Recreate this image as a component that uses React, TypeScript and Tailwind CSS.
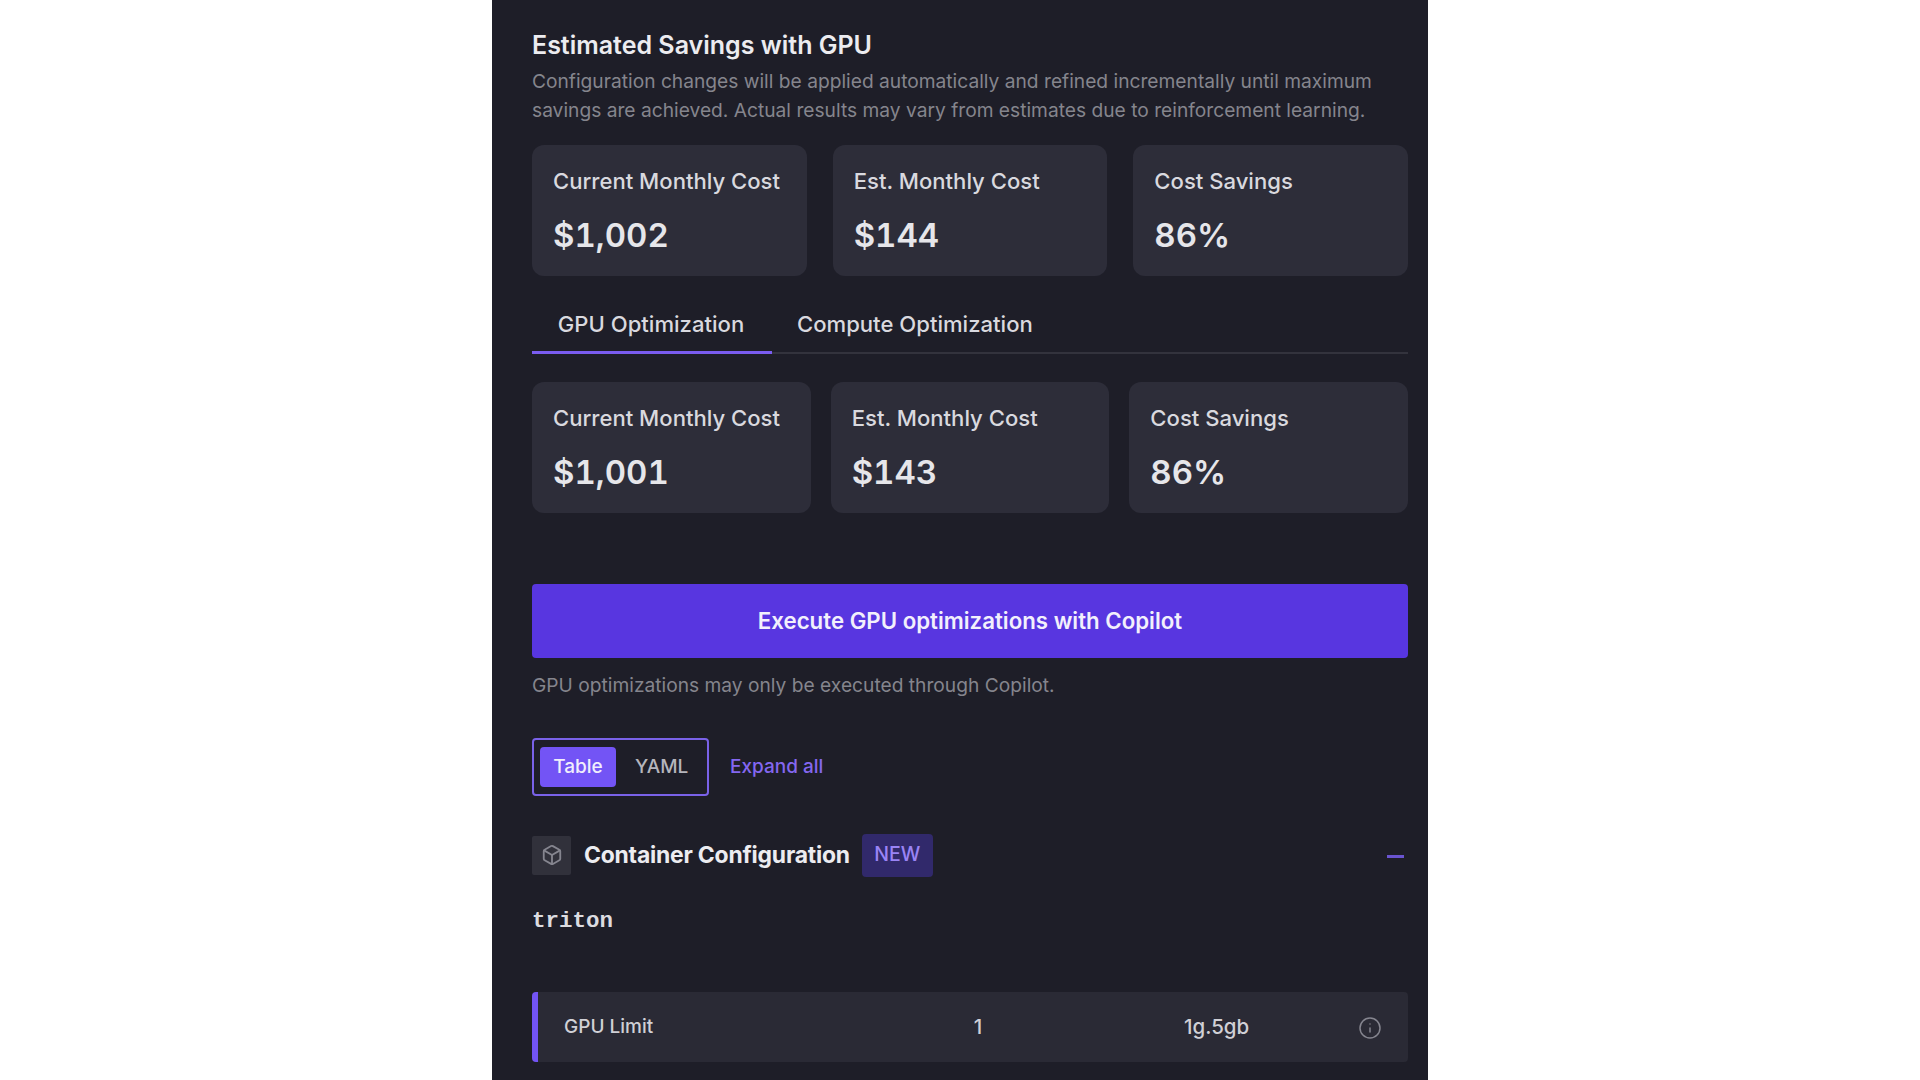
import React from "react";

function Card({ label, value }: { label: string; value: string }) {
  return (
    <div className="h-[131px] rounded-xl bg-[#2d2d39] pl-[21px] pt-[22px]">
      <div className="text-[22.1px] leading-[28px] font-medium text-[#d9d9df]">{label}</div>
      <div className="mt-[20px] text-[33px] leading-[40px] font-semibold tabular-nums text-[#e6e6ea]">{value}</div>
    </div>
  );
}

export default function App() {
  return (
    <div className="h-screen overflow-hidden bg-white flex justify-center font-['Inter',sans-serif]">
      <div className="w-[936px] h-[1080px] overflow-hidden bg-[#1e1e28] pl-[40px] pr-[20px] pt-[29px]">
        <h1 className="text-[25px] leading-[32px] font-semibold text-[#ececf0]">Estimated Savings with GPU</h1>
        <p className="mt-[6px] text-[19.2px] leading-[28.5px] text-[#85858d]">
          Configuration changes will be applied automatically and refined incrementally until maximum savings are achieved. Actual results may vary from estimates due to reinforcement learning.
        </p>
        <div className="mt-[21px] grid grid-cols-3 gap-[26px]">
          <Card label="Current Monthly Cost" value="$1,002" />
          <Card label="Est. Monthly Cost" value="$144" />
          <Card label="Cost Savings" value="86%" />
        </div>
        <div className="mt-[20px] flex h-[58px] border-b-2 border-[#33333d]">
          <div className="w-[240px] h-[58px] border-b-[3px] border-[#7a5cf0] flex items-center justify-center pt-[2px] pr-[2px] text-[22.1px] font-medium text-[#d9d9df]">GPU Optimization</div>
          <div className="ml-[25px] h-[56px] flex items-center pt-[1px] text-[22.1px] font-medium text-[#d9d9df]">Compute Optimization</div>
        </div>
        <div className="mt-[28px] grid grid-cols-3 gap-[20px]">
          <Card label="Current Monthly Cost" value="$1,001" />
          <Card label="Est. Monthly Cost" value="$143" />
          <Card label="Cost Savings" value="86%" />
        </div>
        <button className="mt-[71px] block w-full h-[74px] rounded-[4px] bg-[#5836e0] text-[22.25px] font-semibold text-[#f2f0fc]">Execute GPU optimizations with Copilot</button>
        <p className="mt-[14px] text-[19.2px] leading-[26px] text-[#85858d]">GPU optimizations may only be executed through Copilot.</p>
        <div className="mt-[40px] flex items-center">
          <div className="flex h-[58px] w-[177px] items-center rounded-[4px] border-2 border-[#7a62e8] pl-[6px]">
            <div className="flex h-[40px] w-[76px] items-center justify-center rounded-[4px] bg-[#7354f5] text-[19px] font-medium text-[#f0eefc]">Table</div>
            <div className="ml-[19px] text-[19px] font-medium text-[#b5b5bc]">YAML</div>
          </div>
          <div className="ml-[21px] text-[19px] font-medium text-[#8467f0]">Expand all</div>
        </div>
        <div className="mt-[37px] flex h-[44px] items-center">
          <div className="flex h-[39px] w-[39px] items-center justify-center rounded-[2px] bg-[#31313b]">
            <svg width="22" height="22" viewBox="0 0 24 24" fill="none" stroke="#85858f" strokeWidth="2" strokeLinecap="round" strokeLinejoin="round">
              <path d="M21 8a2 2 0 0 0-1-1.73l-7-4a2 2 0 0 0-2 0l-7 4A2 2 0 0 0 3 8v8a2 2 0 0 0 1 1.73l7 4a2 2 0 0 0 2 0l7-4A2 2 0 0 0 21 16Z" />
              <path d="m3.3 7 8.7 5 8.7-5" />
              <path d="M12 22V12" />
            </svg>
          </div>
          <div className="ml-[13px] text-[22.9px] font-bold tracking-[-0.2px] text-[#ececf0]">Container Configuration</div>
          <div className="ml-[12px] flex h-[43px] w-[71px] items-center justify-center rounded-[4px] bg-[#31296b] text-[19.5px] font-medium text-[#9a84f5]">NEW</div>
          <div className="ml-auto mr-[4px] mt-[2px] h-[3px] w-[17px] bg-[#6a54d0]" />
        </div>
        <div className="mt-[28px] font-['Liberation_Mono',monospace] text-[22.5px] leading-[32px] font-bold text-[#dcdce0]">triton</div>
        <div className="mt-[55px] flex h-[70px] items-center rounded-[4px] border-l-[6px] border-[#7354f5] bg-[#2a2a35] text-[19px] font-medium text-[#d0d0d6]">
          <div className="w-[430px] pl-[26px]">GPU Limit</div>
          <div className="w-[20px] text-center text-[20.5px]">1</div>
          <div className="ml-[196px] text-[20.5px]">1g.5gb</div>
          <div className="ml-auto mr-[26px] mt-[2px]">
            <svg width="24" height="24" viewBox="0 0 24 24" fill="none" stroke="#85858f" strokeWidth="1.5" strokeLinecap="round">
              <circle cx="12" cy="12" r="10" />
              <path d="M12 16v-4" />
              <path d="M12 8h.01" />
            </svg>
          </div>
        </div>
      </div>
    </div>
  );
}
